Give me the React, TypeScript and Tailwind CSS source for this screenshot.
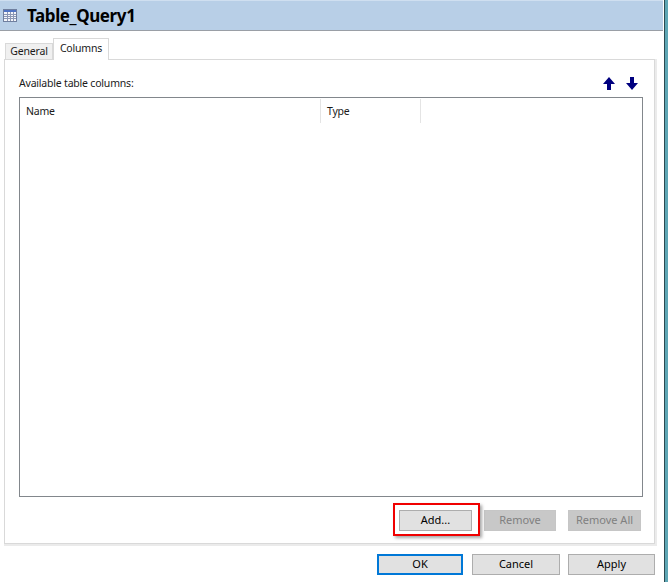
const font = "[font-family:'Noto_Sans',sans-serif]";

function TableIcon() {
  return (
    <svg width="14" height="13" viewBox="0 0 14 13" className="shrink-0">
      <rect x="0.5" y="0.5" width="13" height="12" fill="#f4f6fa" stroke="#6f7f9f" />
      <rect x="1" y="1" width="12" height="2" fill="#4f74c4" />
      <path d="M1 5.5h12M1 7.5h12M1 9.5h12M4.5 3v9M7.5 3v9M10.5 3v9" stroke="#8b98b5" strokeWidth="1" fill="none" />
    </svg>
  );
}

function ArrowUp() {
  return (
    <svg width="12" height="13" viewBox="0 0 12 13">
      <path d="M6 0 L12 7 H8 V13 H4 V7 H0 Z" fill="#00007f" />
    </svg>
  );
}

function ArrowDown() {
  return (
    <svg width="12" height="13" viewBox="0 0 12 13">
      <path d="M6 13 L12 6 H8 V0 H4 V6 H0 Z" fill="#00007f" />
    </svg>
  );
}

function Btn({ label, w, kind }: { label: string; w: string; kind?: "disabled" | "primary" }) {
  let cls = "border border-[#adadad] bg-[#e1e1e1] text-black";
  if (kind === "disabled") cls = "border border-[#c6c6c6] bg-[#c8c8c8] text-[#808080]";
  if (kind === "primary") cls = "border-2 border-[#0078d7] bg-[#e1e1e1] text-black";
  return (
    <button className={`${w} h-[21px] flex items-center justify-center text-[11px] ${cls}`}>{label}</button>
  );
}

export default function App() {
  return (
    <div className={`w-[668px] h-[582px] flex bg-white overflow-hidden text-[#1a1a1a] ${font}`}>
      <div className="w-[664px] flex flex-col">
        <div className="h-[31px] shrink-0 flex items-center gap-[10px] pl-[3px] mr-px bg-[#b8cfe7] border-b border-[#9a9fa6] border-t border-t-[#cfdff0]">
          <TableIcon />
          <span className="text-[17px] font-bold text-black leading-none tracking-[-0.4px]">Table_Query1</span>
        </div>

        <div className="h-[7px] shrink-0" />
        <div className="flex items-end h-[21px] shrink-0 pl-[5px] relative z-10">
          <div className="w-[48px] h-[16px] mb-0 flex items-center justify-center text-[10.5px] tracking-[-0.2px] bg-[#f0f0f0] border border-b-0 border-[#d9d9d9]">
            General
          </div>
          <div className="w-[56px] h-[22px] -mb-px flex items-center justify-center text-[10.5px] tracking-[-0.2px] bg-white border border-b-0 border-[#d9d9d9] pb-[1px]">
            Columns
          </div>
        </div>

        <div className="ml-[4px] w-[653px] h-[487px] shrink-0 flex flex-col bg-white border-2 border-l-0 border-t-0 border-[#ebebeb]">
          <div className="h-full flex flex-col border border-[#d9d9d9] pl-[14px] pr-[8px]">
            <div className="h-[37px] shrink-0 flex items-center justify-between pt-[9px]">
              <span className="text-[10.5px] tracking-[-0.2px] pt-[2px]">Available table columns:</span>
              <div className="flex gap-[11px] pr-[8px]">
                <ArrowUp />
                <ArrowDown />
              </div>
            </div>
            <div className="w-[624px] h-[400px] shrink-0 border border-[#82878c] bg-white">
              <div className="flex h-[24px] mt-[1px] text-[10.5px] tracking-[-0.2px]">
                <div className="w-[301px] flex items-center pl-[6px] pt-[2px] border-r border-[#e4e4e4]">Name</div>
                <div className="w-[100px] flex items-center pl-[6px] pt-[2px] border-r border-[#e4e4e4]">Type</div>
              </div>
            </div>
            <div className="flex justify-end gap-[12px] mt-[13px] pr-[5px]">
              <div className="relative">
                <Btn label="Add..." w="w-[73px]" />
                <div className="absolute -left-[6px] -top-[7px] w-[87px] h-[33px] border-2 border-[#f00000] shadow-[2px_2px_3px_rgba(0,0,0,0.35)]" />
              </div>
              <Btn label="Remove" w="w-[72px]" kind="disabled" />
              <Btn label="Remove All" w="w-[73px]" kind="disabled" />
            </div>
          </div>
        </div>

        <div className="flex mt-[8px] ml-[377px]">
          <Btn label="OK" w="w-[86px] mr-[9px]" kind="primary" />
          <Btn label="Cancel" w="w-[88px] mr-[8px]" />
          <Btn label="Apply" w="w-[87px]" />
        </div>
      </div>
      <div className="w-[4px] bg-[#5ea6b4] border-l border-[#2c4a50]" />
    </div>
  );
}
